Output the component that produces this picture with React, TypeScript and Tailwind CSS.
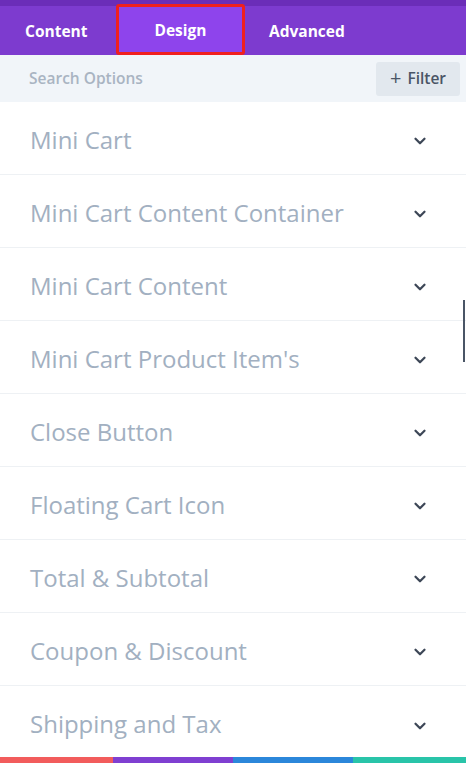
import { ChevronDown } from "lucide-react";

const sections = [
  "Mini Cart",
  "Mini Cart Content Container",
  "Mini Cart Content",
  "Mini Cart Product Item's",
  "Close Button",
  "Floating Cart Icon",
  "Total & Subtotal",
  "Coupon & Discount",
  "Shipping and Tax",
];

export default function App() {
  return (
    <div
      className="w-[466px] h-[763px] overflow-hidden flex flex-col bg-white relative"
      style={{ fontFamily: '"Open Sans", sans-serif' }}
    >
      {/* tabs */}
      <div className="shrink-0 bg-[#6b2db8] pt-[6px]">
        <div className="h-[49px] bg-[#7d3bcf] flex items-stretch text-white font-bold text-[15.5px]">
          <div className="w-[116px] flex items-center pl-[25px] pt-[2px]">Content</div>
          <div className="w-[129px] -mt-[2px] flex items-center justify-center pt-[2px] bg-[#8e44ec] border-[3px] border-[#f0201e] rounded-[3px]">
            Design
          </div>
          <div className="flex items-center pl-[24px] pt-[2px]">Advanced</div>
        </div>
      </div>

      {/* search */}
      <div className="shrink-0 h-[47px] bg-[#f1f5f9] flex items-center justify-between pl-[29px] pr-[6px]">
        <span className="text-[15.5px] font-semibold text-[#a9b4c2]">Search Options</span>
        <div className="h-[34px] w-[84px] rounded-[3px] bg-[#e2e8ee] flex items-center justify-center gap-[6px] text-[15.5px] font-semibold text-[#4a5566]">
          <span className="text-[20px] leading-none font-normal -mt-[2px]">+</span>
          Filter
        </div>
      </div>

      {/* toggles */}
      <div className="flex-1 min-h-0 overflow-hidden flex flex-col">
        {sections.map((s, i) => (
          <div
            key={s}
            className={`h-[73px] shrink-0 flex items-center justify-between pl-[30px] pr-[37px] ${
              i < sections.length - 1 ? "border-b border-[#eef1f4]" : ""
            }`}
          >
            <span className="text-[24px] text-[#a2b0c1] pt-[3px]">{s}</span>
            <ChevronDown size={18} strokeWidth={3} className="text-[#3d4757] mt-[6px]" />
          </div>
        ))}
      </div>

      {/* scrollbar thumb */}
      <div className="absolute right-[1px] top-[300px] w-[2px] h-[62px] bg-[#4a5566]" />

      {/* bottom stripes */}
      <div className="h-[6px] flex shrink-0">
        <div className="w-[113px] bg-[#f25c5c]" />
        <div className="w-[120px] bg-[#7f3fd1]" />
        <div className="w-[120px] bg-[#2b87da]" />
        <div className="flex-1 bg-[#29c4a9]" />
      </div>
    </div>
  );
}
